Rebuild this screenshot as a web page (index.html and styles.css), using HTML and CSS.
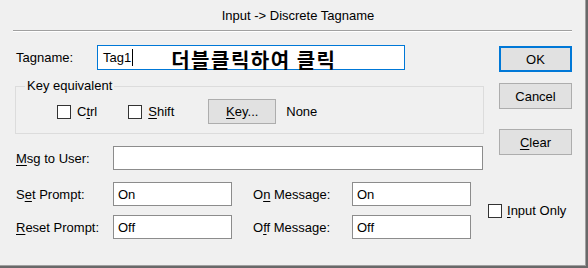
FILE: index.html
```html
<!DOCTYPE html>
<html lang="en">
<head>
    <meta charset="UTF-8">
    <meta name="viewport" content="width=device-width, initial-scale=1.0">
    <title>Input -> Discrete Tagname</title>
    <link rel="stylesheet" href="styles.css">
</head>
<body>
    <div class="dialog">
        <div class="caption">Input -&gt; Discrete Tagname</div>
        <div class="rule"></div>

        <div class="top">
            <div class="main">
                <div class="row">
                    <span class="label tag-label">Tagname:</span>
                    <div class="field tag-field focused">
                        <span>Tag1</span><span class="caret"></span>
                        <span class="note">더블클릭하여 클릭</span>
                    </div>
                </div>

                <fieldset class="group">
                    <legend>Key equivalent</legend>
                    <div class="keys">
                        <span class="check"><span class="box"></span><span>C<u>t</u>rl</span></span>
                        <span class="check shift"><span class="box"></span><span><u>S</u>hift</span></span>
                        <span class="button key-button"><span><u>K</u>ey...</span></span>
                        <span class="key-name">None</span>
                    </div>
                </fieldset>

                <div class="row msg-row">
                    <span class="label wide-label"><u>M</u>sg to User:</span>
                    <div class="field msg-field"></div>
                </div>
            </div>

            <div class="buttons">
                <span class="button default">OK</span>
                <span class="button cancel">Cancel</span>
                <span class="button clear"><span><u>C</u>lear</span></span>
            </div>
        </div>

        <div class="prompts">
            <span class="label">S<u>e</u>t Prompt:</span>
            <div class="field">On</div>
            <span class="label msg-label">O<u>n</u> Message:</span>
            <div class="field">On</div>
            <span class="check input-only"><span class="box"></span><span><u>I</u>nput Only</span></span>

            <span class="label"><u>R</u>eset Prompt:</span>
            <div class="field">Off</div>
            <span class="label msg-label">O<u>f</u>f Message:</span>
            <div class="field">Off</div>
        </div>
    </div>
</body>
</html>
```

FILE: styles.css
```css
body {
    margin: 0;
    font-family: "Liberation Sans", Arial, sans-serif;
    font-size: 13px;
    color: #000;
}
.dialog {
    width: 586px;
    height: 266px;
    background-color: #f0f0f0;
    border-right: 2px solid #696969;
    border-bottom: 2px solid #696969;
    box-shadow: inset -1px -1px #a0a0a0;
}
.caption {
    height: 29px;
    padding-top: 1px;
    padding-left: 10px;
    line-height: 30px;
    text-align: center;
}
.rule {
    margin: 0 14px 0 13px;
    border-top: 1px solid #a0a0a0;
    border-bottom: 1px solid #fff;
}
u {
    text-decoration-thickness: 1px;
    text-underline-offset: 2px;
}

/* top part: tagname, key group, message + buttons */
.top {
    display: flex;
    margin-top: 13px;
    padding-left: 16px;
}
.main {
    width: 467px;
}
.row {
    display: flex;
    align-items: center;
}
.label {
    align-self: center;
    white-space: nowrap;
}
.tag-label {
    width: 81px;
}
.wide-label {
    width: 97px;
}
.field {
    box-sizing: border-box;
    height: 24px;
    display: flex;
    align-items: center;
    padding-left: 4px;
    background-color: #fff;
    border: 1px solid #8c8c8c;
}
.tag-field {
    width: 308px;
    height: 25px;
    padding-left: 5px;
}
.focused {
    border-color: #0078d7;
}
.caret {
    width: 1px;
    height: 17px;
    margin-left: 1px;
    background-color: #000;
}
.note {
    margin: 4px 0 0 38px;
    font-family: "Noto Sans CJK KR", sans-serif;
    font-weight: bold;
    font-size: 20px;
    line-height: 20px;
    letter-spacing: 1.5px;
}

.group {
    box-sizing: border-box;
    width: 469px;
    margin: 9px 0 0 -1px;
    padding: 0 0 9px 9px;
    border: 1px solid #dcdcdc;
}
.group legend {
    padding: 0 2px;
    line-height: 14px;
}
.keys {
    display: flex;
    align-items: center;
    margin-top: 6px;
    padding-left: 32px;
}
.check {
    display: flex;
    align-items: center;
    white-space: nowrap;
}
.box {
    box-sizing: border-box;
    width: 14px;
    height: 14px;
    margin-right: 6px;
    background-color: #fff;
    border: 1px solid #333;
}
.shift {
    margin-left: 31px;
}
.button {
    box-sizing: border-box;
    display: flex;
    align-items: center;
    justify-content: center;
    background-color: #e1e1e1;
    border: 1px solid #adadad;
}
.key-button {
    width: 68px;
    height: 25px;
    margin-left: 34px;
}
.key-name {
    margin-left: 10px;
}
.msg-row {
    margin-top: 12px;
}
.msg-field {
    width: 370px;
}

.buttons {
    display: flex;
    flex-direction: column;
    width: 73px;
    margin: 1px 0 0 16px;
}
.buttons .button {
    height: 26px;
}
.default {
    border: 2px solid #0078d7;
}
.cancel {
    margin-top: 11px;
}
.clear {
    margin-top: 20px;
}

/* bottom prompts */
.prompts {
    display: grid;
    grid-template-columns: 97px 119px 120px 119px 1fr;
    grid-template-rows: 24px 24px;
    row-gap: 9px;
    margin-top: 12px;
    padding-left: 16px;
}
.msg-label {
    padding-left: 21px;
}
.input-only {
    grid-row: 1 / 3;
    grid-column: 5;
    padding-left: 17px;
}
.input-only .box {
    margin-right: 5px;
}
```
